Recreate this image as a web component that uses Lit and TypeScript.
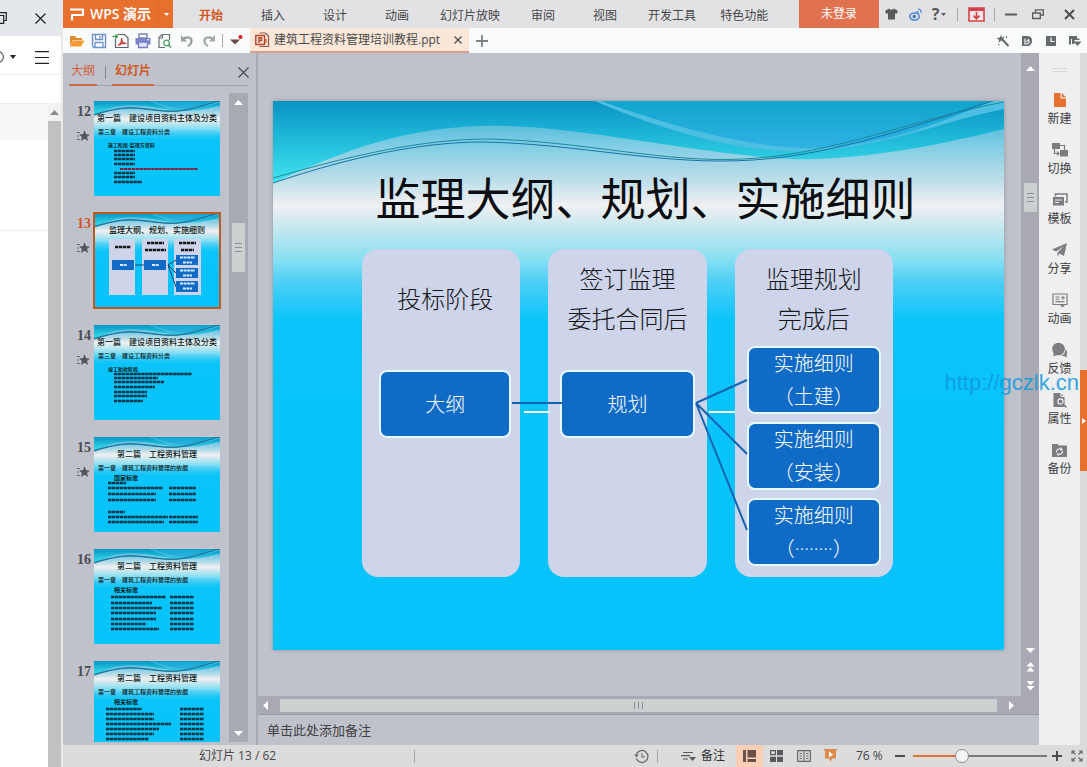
import { LitElement, html, svg, css, nothing } from "lit";
import { customElement, state } from "lit/decorators.js";
import { classMap } from "lit/directives/class-map.js";

const icon = (w: number, h: number, body: unknown) =>
  html`<svg width=${w} height=${h} viewBox="0 0 ${w} ${h}" fill="none" aria-hidden="true">${body}</svg>`;

const icons = {
  logo: icon(15, 14, svg`<path d="M0 2.500H13V8H2V13.500" stroke="#fff" stroke-width="2.200" stroke-linejoin="round"/>`),
  folder: icon(16, 14, svg`<path d="M1 12V2H6L7.5 4H13V6H4Z" fill="#e08a2c"/><path d="M4.2 6.5H15.5L12 12.5H1Z" fill="#f79a35"/>`),
  save: icon(16, 16, svg`<path d="M1.5 1.5H14.5V14.5H3L1.5 13Z" stroke="#6f93cf" stroke-width="1.4"/><path d="M4.5 2V6.5H11.5V2M4 14V9.5H12V14" stroke="#6f93cf" stroke-width="1.3"/><path d="M9 3V5.500" stroke="#6f93cf" stroke-width="1.4"/>`),
  pdf: icon(18, 16, svg`<path d="M5.500 1.5H12.500L16 5V14.500H3.500V6" stroke="#5f6468" stroke-width="1.2"/><path d="M0.500 3.500H5.500M3.500 1.500L5.500 3.500L3.500 5.500" stroke="#3f9a57" stroke-width="1.3"/><path d="M6 12.500C8.500 11 10 8 9.500 5C9.500 8.500 11.500 10.500 14.500 10.500C11 10 8 11 6 12.500Z" stroke="#d0393c" stroke-width="1.2"/>`),
  print: icon(16, 16, svg`<path d="M4 1H12V5H4Z" stroke="#7880c4" stroke-width="1.4"/><path d="M0.500 5H15.500V11.500H0.500Z" fill="#7c84c8"/><path d="M3.500 9H12.500V14.500H3.500Z" fill="#dfe1f5" stroke="#7880c4" stroke-width="1.3"/><path d="M12 6.800H14" stroke="#fff"/>`),
  preview: icon(16, 16, svg`<path d="M12.500 7V1.500H5L2 4.500V14.500H8" stroke="#6a6e72" stroke-width="1.2"/><path d="M5.500 1.500V5H2" stroke="#6a6e72"/><circle cx="9.500" cy="10" r="2.800" stroke="#4b9b5d" stroke-width="1.2"/><path d="M11.500 12L14 14.500" stroke="#4b9b5d" stroke-width="1.600"/>`),
  undo: icon(14, 13, svg`<path d="M2.500 5.500C7 1.500 12 3.500 11.500 7.500C11.300 9.500 10 11 8 12" stroke="#999ca1" stroke-width="2.200"/><path d="M1 1V7.500H7Z" fill="#999ca1"/>`),
  redo: icon(14, 13, svg`<path d="M11.500 5.500C7 1.500 2 3.500 2.500 7.500C2.700 9.500 4 11 6 12" stroke="#a3a6aa" stroke-width="2.200"/><path d="M13 1V7.500H7Z" fill="#a3a6aa"/>`),
  more: icon(16, 14, svg`<path d="M1 5.500H11L6 10.500Z" fill="#6a4a4a"/><circle cx="11.500" cy="3" r="2.100" fill="#d8202c"/>`),
  ppt: icon(15, 16, svg`<path d="M4.500 1H10.500L13.500 4V14.500H4.500" stroke="#8d5a4c" stroke-width="1.200"/><path d="M0.800 3.500H9.500V12.500H0.800Z" fill="#fbe6d8" stroke="#b8422a" stroke-width="1.400"/><path d="M4 11V5.800H6.500V8.500H4" stroke="#b8422a" stroke-width="1.400"/><path d="M11 7V11" stroke="#b8422a"/>`),
  x8: icon(8, 8, svg`<path d="M0.500 0.500L7.500 7.500M7.500 0.500L0.500 7.500" stroke="currentColor" stroke-width="1.100"/>`),
  x11: icon(11, 11, svg`<path d="M0.500 0.500L10.500 10.500M10.500 0.500L0.500 10.500" stroke="currentColor" stroke-width="1.300"/>`),
  xBold: icon(11, 11, svg`<path d="M1 1L10 10M10 1L1 10" stroke="currentColor" stroke-width="2"/>`),
  plusTab: icon(12, 12, svg`<path d="M6 0V12M0 6H12" stroke="#7d8084" stroke-width="1.800"/>`),
  shirt: icon(13, 12, svg`<path d="M4 0.500C5 2 8 2 9 0.500L13 3L11.500 6L10 5.300V11.500H3V5.300L1.500 6L0 3Z" fill="#5a5a5c"/>`),
  weibo: icon(13, 13, svg`<ellipse cx="5.500" cy="8.500" rx="4.700" ry="3.500" stroke="#5b8fd6" stroke-width="1.700"/><circle cx="5.300" cy="8.500" r="1.700" fill="#3f73bd"/><path d="M7 4.200L9 3.800V6M9 0.800C11.500 0.800 12.500 3 12 5" stroke="#5b8fd6" stroke-width="1.300"/>`),
  download: icon(17, 15, svg`<path d="M1 1H16V14H1Z" fill="#f6e7e7" stroke="#d4424c" stroke-width="1.600"/><path d="M1 1H16V4H1Z" fill="#d4424c"/><path d="M8.500 5V11.500M5.500 8.700L8.500 11.700L11.500 8.700" stroke="#d4424c" stroke-width="1.700"/>`),
  min: icon(12, 3, svg`<path d="M0 1.500H12" stroke="#5b5b5d" stroke-width="2"/>`),
  restore: icon(12, 11, svg`<path d="M3.500 3V0.800H11.300V6H8.500" stroke="#5b5b5d" stroke-width="1.300"/><path d="M0.700 4H8.300V9.500H0.700Z" stroke="#5b5b5d" stroke-width="1.300"/>`),
  wand: icon(14, 13, svg`<path d="M5.500 4.500L12.500 12" stroke="#66696d" stroke-width="2"/><path d="M5 0.500L5.800 3.500L9 2.500L7 5L8 8L5 6.500L2.500 9L3 5.800L0.500 4L4 3.500Z" fill="#66696d"/><path d="M2 10.500H3.500M10.500 2V4" stroke="#66696d"/>`),
  docs: icon(12, 12, svg`<path d="M1 1H6C10.500 1 11 4 11 6C11 9 9 11 6 11H1Z" fill="#66696d"/><path d="M4 3.500V9H5.500C8.500 8.500 8.500 6.500 7.500 4.500L5.500 7" stroke="#fff" stroke-width="1.100"/>`),
  clockSq: icon(12, 12, svg`<path d="M1 1H11V11H1Z" fill="#66696d"/><path d="M6 2.500V6.500H9.500" stroke="#fff" stroke-width="1.200"/>`),
  skinMenu: icon(14, 12, svg`<path d="M1 1H9V3.500H11.500V5H6.500V9H4V4H3V9.500H1Z" fill="#66696d"/><path d="M5.500 6.500H13.500L9.500 11Z" fill="#66696d"/>`),
  star: icon(13, 12, svg`<path d="M0 2.500H2.500M0 6H1.500M0 9.500H2.500" stroke="#55565b" stroke-width="1"/><path d="M7.500 0.300L9.100 4.200L13 4.400L10 7L11.100 11L7.500 8.700L3.900 11L5 7L2 4.400L5.900 4.200Z" fill="#55565b"/>`),
  newDoc: icon(16, 16, svg`<path d="M2 1H8.500V6.500H14V15H2Z" fill="#e8702f"/><path d="M9.800 1L14 5.300H9.800Z" fill="#e8702f"/>`),
  swap: icon(18, 16, svg`<path d="M1 1H9V7H1Z" fill="#7b7d80"/><path d="M9 8H17V14.500H9Z" fill="#7b7d80"/><path d="M9 3.500H13.500V8M3.500 7V11.500H7.500M6 9.500L8 11.500L6 13.500" stroke="#7b7d80" stroke-width="1.200"/>`),
  template: icon(16, 14, svg`<path d="M3.500 3.500V1H15V9H13" stroke="#7b7d80" stroke-width="1.500"/><path d="M1 4H12V12.500H1Z" fill="#7b7d80"/><path d="M3 7H10M3 9.500H7" stroke="#efeff0" stroke-width="1.100"/>`),
  share: icon(17, 16, svg`<path d="M16 1L13 14L8.500 11.500L6.500 14.500V10.500L12.500 4.500L5 9.500L1 7.500Z" fill="#7b7d80"/>`),
  anim: icon(16, 16, svg`<path d="M1 2H15V12.500H1Z" stroke="#7b7d80" stroke-width="1.200"/><path d="M3.500 5H7.500M3.500 7.300H7.500M3.500 9.600H12.500M9 5.800H13M11 4V7.800" stroke="#7b7d80" stroke-width="1.100"/><path d="M8 13H13L10.500 15.500Z" fill="#7b7d80"/>`),
  feedback: icon(17, 16, svg`<circle cx="7.500" cy="7" r="6.300" fill="#7b7d80"/><path d="M2.500 10V14.500L7 12.500Z" fill="#7b7d80"/><path d="M14.500 7.500C14.500 11 12.500 13 10 13.700L13 14L16 15.500L15.500 12.500C17 11 16 8.500 14.500 7.500Z" fill="#7b7d80"/>`),
  props: icon(16, 17, svg`<path d="M1.500 1H8.500L12.500 5V15H1.500Z" fill="#7b7d80"/><path d="M9 0.500V4.500H13" stroke="#efeff0"/><circle cx="8.500" cy="9.500" r="2.600" stroke="#efeff0" stroke-width="1.200"/><path d="M10.500 11.500L14.500 15.500" stroke="#7b7d80" stroke-width="1.600"/>`),
  backup: icon(17, 15, svg`<path d="M1 1H6.500L8 2.500H16V14H1Z" fill="#7b7d80"/><path d="M5.500 9.500C5 6.500 8 4.800 10.500 6.300M11.500 7.500C12 10.500 9 12.200 6.700 10.800M9.500 4.500L11 6.500L8.800 7.300M7.500 12.500L6 10.500" stroke="#efeff0" stroke-width="1.100"/>`),
  history: icon(15, 15, svg`<path d="M2.300 5.500A6 6 0 1 1 2.300 9.500" stroke="#6e6f72" stroke-width="1.300"/><path d="M0 5.500H5L2.500 8.500Z" fill="#6e6f72"/><path d="M8 4.500V8H11" stroke="#6e6f72" stroke-width="1.200"/>`),
  notes: icon(15, 11, svg`<path d="M2 1.500H12M0 4.700H9M2 8H7" stroke="#58595c" stroke-width="1.200"/><path d="M8 6H15L11.500 10Z" fill="#58595c"/>`),
  viewNormal: icon(13, 12, svg`<path d="M0 0H3V12H0ZM4.500 0H13V7.500H4.500ZM4.500 9H13V12H4.500Z" fill="#6a5149"/>`),
  viewSorter: icon(13, 12, svg`<path d="M0.600 0.600H5.400V4.600H0.600Z" stroke="#58595c" stroke-width="1.200"/><path d="M7 0H13V5.200H7ZM0 6.700H6V12H0ZM7 6.700H13V12H7Z" fill="#58595c"/>`),
  viewRead: icon(14, 12, svg`<path d="M0.600 0.600H13.400V11.400H0.600ZM7 0.600V11.400" stroke="#66676a" stroke-width="1.100"/><path d="M2.500 3.500H5M2.500 6H5M2.500 8.500H5M9 3.500H11.500M9 6H11.500M9 8.500H11.500" stroke="#66676a"/>`),
  viewPlay: icon(13, 14, svg`<path d="M0 0H13V1.500H12V9.500H8L6.500 13L5 9.500H1V1.500H0Z" fill="#dd8a4f"/><path d="M5 2.500L9 5.500L5 8.500Z" fill="#fff"/>`),
  fit: icon(12, 12, svg`<path d="M1 4V1H4M8 1H11V4M11 8V11H8M4 11H1V8M1.500 1.500L4.500 4.500M10.500 1.500L7.500 4.500M10.500 10.500L7.500 7.500M1.500 10.500L4.500 7.500" stroke="#66676a" stroke-width="1.100"/>`),
  up: icon(9, 5, svg`<path d="M4.500 0L9 5H0Z" fill="currentColor"/>`),
  down: icon(9, 5, svg`<path d="M4.500 5L9 0H0Z" fill="currentColor"/>`),
  left: icon(5, 9, svg`<path d="M5 0V9L0 4.500Z" fill="currentColor"/>`),
  right: icon(5, 9, svg`<path d="M0 0V9L5 4.500Z" fill="currentColor"/>`),
  prev: icon(9, 10, svg`<path d="M4.500 0L8.500 4.500H0.500ZM4.500 5L8.500 9.500H0.500Z" fill="#fff"/>`),
  next: icon(9, 10, svg`<path d="M4.500 4.500L8.500 0H0.500ZM4.500 9.500L8.500 5H0.500Z" fill="#fff"/>`),
};

const ui = css`
  * { box-sizing: border-box; }
  svg { display: block; flex: none; }
  button {
    display: flex; align-items: center; justify-content: center;
    margin: 0; padding: 0; border: 0; background: none;
    color: inherit; font: inherit; white-space: nowrap;
  }
`;

/** The shared slide master: vertical gradient with the wave ribbon on top. */
@customElement("slide-backdrop")
class SlideBackdrop extends LitElement {
  static styles = css`
    :host { position: absolute; inset: 0; display: block; }
    svg { display: block; width: 100%; height: 100%; }
  `;
  render() {
    return html`<svg viewBox="0 0 731 549" preserveAspectRatio="none" fill="none" aria-hidden="true">
      <defs>
        <linearGradient id="base" x1="0" y1="0" x2="0" y2="549" gradientUnits="userSpaceOnUse">
          <stop offset="0" stop-color="#2fa9d3"/><stop offset="0.075" stop-color="#7acbe4"/>
          <stop offset="0.135" stop-color="#b4dbe8"/><stop offset="0.19" stop-color="#f0f0f2"/>
          <stop offset="0.24" stop-color="#bce6ee"/><stop offset="0.29" stop-color="#86dff3"/>
          <stop offset="0.33" stop-color="#4dcff6"/><stop offset="0.4" stop-color="#0ac4fa"/>
          <stop offset="1" stop-color="#06c3fb"/>
        </linearGradient>
        <linearGradient id="ribbon" x1="0" y1="0" x2="0" y2="80" gradientUnits="userSpaceOnUse">
          <stop offset="0" stop-color="#0a93c4"/><stop offset="0.4" stop-color="#1cb4d6"/><stop offset="1" stop-color="#40e2ee"/>
        </linearGradient>
        <linearGradient id="sheen" x1="0" y1="0" x2="0" y2="55" gradientUnits="userSpaceOnUse">
          <stop offset="0" stop-color="#0fa5cd"/><stop offset="1" stop-color="#36b4e8"/>
        </linearGradient>
      </defs>
      <path d="M0 0H731V549H0Z" fill="url(#base)"/>
      <path d="M0 0H731V28C660 46 580 60 520 58C420 54 300 22 207 25C120 28 60 55 0 82Z" fill="url(#ribbon)"/>
      <path d="M322 0C400 34 480 54 540 50C620 44 670 20 731 8V0Z" fill="#4cbfe3"/>
      <path d="M328 0C405 28 490 50 550 47C620 42 670 20 720 0Z" fill="url(#sheen)"/>
      <path vector-effect="non-scaling-stroke" d="M0 77C80 54 150 38 215 38C310 40 390 62 470 58C560 54 640 18 731 1" stroke="#1e8a9c"/>
      <path vector-effect="non-scaling-stroke" d="M0 82C80 55 150 41 210 41C310 43 390 65 480 59C560 54 640 26 731 -4" stroke="#1874a4"/>
    </svg>`;
  }
}

/** The enlarged slide under edit. */
@customElement("slide-stage")
class SlideStage extends LitElement {
  static styles = [ui, css`
    :host {
      position: relative; display: block; width: 100%; aspect-ratio: 731 / 549; overflow: hidden;
      font-family: "Noto Sans CJK SC", sans-serif;
    }
    .title {
      position: relative; margin: 0; padding: 66px 0 22px 14px; color: #0b0d10;
      font-size: 45px; line-height: 60px; font-weight: 400; text-align: center; white-space: nowrap;
    }
    .cards {
      position: relative; display: grid; grid-template-columns: repeat(3, minmax(0, 1fr));
      column-gap: 28px; margin: 0 111px 0 89px; height: 328px;
    }
    .card { padding: 0 12px; border-radius: 16px; background: #ced4ea; }
    .card:first-child { padding: 0 9px 0 17px; }
    .head {
      display: flex; flex-direction: column; justify-content: center; height: 97px; margin: 0;
      color: #17181c; font-size: 24px; line-height: 40px; font-weight: 300; text-align: center; white-space: nowrap;
    }
    .nodes { display: grid; gap: 8px; }
    .nodes.low { padding-top: 24px; }
    .node {
      display: flex; flex-direction: column; justify-content: center; height: 68px;
      border: 2px solid #e4f8ff; border-radius: 8px; background: #0f6bc6; color: #fff;
      font: 300 20px/33px "Open Sans", "Noto Sans CJK SC", sans-serif; text-align: center; white-space: nowrap;
    }
    .links { position: absolute; inset: 0; width: 100%; height: 100%; }
  `];
  private cards = [
    { head: ["投标阶段"], nodes: [["大纲"]] },
    { head: ["签订监理", "委托合同后"], nodes: [["规划"]] },
    { head: ["监理规划", "完成后"], nodes: [["实施细则", "（土建）"], ["实施细则", "（安装）"], ["实施细则", "（········）"]] },
  ];
  render() {
    return html`
      <slide-backdrop></slide-backdrop>
      <h1 class="title">监理大纲、规划、实施细则</h1>
      <div class="cards">
        ${this.cards.map((c) => html`<section class="card">
          <h2 class="head">${c.head.map((l) => html`<span>${l}</span>`)}</h2>
          <div class=${classMap({ nodes: true, low: c.nodes.length === 1 })}>
            ${c.nodes.map((n) => html`<div class="node">${n.map((l) => html`<span>${l}</span>`)}</div>`)}
          </div>
        </section>`)}
      </div>
      <svg class="links" viewBox="0 0 731 549" fill="none" aria-hidden="true">
        <path d="M251 311H277M436 311H462" stroke="#fff" stroke-width="2"/>
        <path d="M239 302H289M423 302L474 279M423 302L474 353M423 302L474 429" stroke="#1463b0" stroke-width="2"/>
      </svg>`;
  }
}

type Row = [x: number, y: number, w: number, color?: string];
interface Thumb { no: number; star: boolean; title: string; sub?: string; head?: string; wide?: boolean; rows: Row[]; }

const pairs = (x: number, ys: number[], ws: number[], x2: number, w2: number): Row[] =>
  ys.flatMap((y, i) => [[x, y, ws[i]], [x2, y, w2]] as Row[]);

const thumbs: Thumb[] = [
  { no: 12, star: true, title: "第一篇　建设项目资料主体及分类", sub: "第三章　建设工程资料分类", head: "施工阶段-监理方资料",
    rows: [[20, 50, 21], [20, 54, 21], [20, 58, 21], [20, 63, 21], [26, 68, 78, "#7a2038"], [20, 72, 21], [20, 76, 21], [20, 81, 28]] },
  { no: 13, star: true, title: "监理大纲、规划、实施细则", rows: [] },
  { no: 14, star: true, title: "第一篇　建设项目资料主体及分类", sub: "第三章　建设工程资料分类", head: "竣工验收阶段",
    rows: [[20, 49, 78], [20, 53, 44], [20, 57, 50], [20, 62, 41], [20, 67, 33], [20, 71, 33], [20, 76, 29]] },
  { no: 15, star: true, title: "第二篇　工程资料管理", sub: "第一章　建筑工程资料管理的依据", head: "国家标准", wide: true,
    rows: [[14, 46, 18], ...pairs(14, [51, 57, 63], [55, 48, 48], 75, 27), [14, 75, 17], ...pairs(14, [80, 85], [60, 56], 75, 29)] },
  { no: 16, star: false, title: "第二篇　工程资料管理", sub: "第一章　建筑工程资料管理的依据", head: "相关标准", wide: true,
    rows: pairs(17, [48, 54, 59, 64, 70, 75, 80], [55, 41, 51, 45, 45, 35, 48], 76, 24) },
  { no: 17, star: false, title: "第二篇　工程资料管理", sub: "第一章　建筑工程资料管理的依据", head: "相关标准", wide: true,
    rows: pairs(12, [48, 53, 58, 63, 68, 73, 78], [36, 48, 48, 65, 53, 48, 43], 86, 24) },
];

/** Outline pane with slide previews. */
@customElement("slide-list")
class SlideList extends LitElement {
  static styles = [ui, css`
    :host { display: flex; flex-direction: column; width: 195px; border-right: 2px solid #a9abb6; color: #4c4d52; }
    .tabs { display: flex; align-items: center; height: 33px; margin: 0 7px 7px 6px; padding-top: 6px; border-bottom: 1px solid #9fa1ac; color: #d2613a; }
    .tab { height: 27px; padding: 0 2px; border-bottom: 2px solid #cf6a4a; }
    .tab.on { font-weight: 700; color: #cd5a22; padding: 0 3px; }
    .bar { width: 1px; height: 13px; margin: 0 6px 0 8px; background: #85868e; }
    .close { margin-left: auto; color: #4c4d52; width: 12px; height: 24px; }
    .body { flex: 1; display: flex; min-height: 0; margin-bottom: 3px; }
    .items { flex: 1; min-width: 0; overflow: hidden; margin: 0; padding: 8px 0 0 14px; list-style: none; }
    .item { display: flex; height: 112px; }
    .side { display: flex; flex-direction: column; width: 17px; gap: 7px; }
    .no { font: bold 14px/22px "Liberation Serif", serif; }
    .on .no { color: #d2552a; }
    .thumb {
      position: relative; flex-direction: column; align-items: stretch; justify-content: flex-start;
      width: 126px; height: 95px; overflow: hidden; text-align: left; color: #0c1a20;
      font-family: "Noto Sans CJK SC", sans-serif;
    }
    .frame { width: 126px; height: 95px; }
    .on .frame { outline: 3px solid #bb5a22; outline-offset: -2px; }
    .on .thumb { clip-path: inset(1px); }
    .t, .s, .h { position: relative; display: block; flex: none; white-space: nowrap; }
    .t { padding-top: 10px; font-size: 8px; line-height: 14px; font-weight: 500; text-align: center; }
    .s { padding-left: 4px; font-size: 6px; line-height: 14px; font-weight: 500; }
    .h { padding-left: 14px; padding-top: 2px; font-size: 5px; line-height: 8px; font-weight: 700; }
    .h.wide { padding: 0 0 0 20px; font-size: 6px; line-height: 5px; }
    .art { position: absolute; inset: 0; }
    .scroll { display: flex; flex-direction: column; align-items: center; width: 19px; margin-right: 8px; padding: 7px 0 6px; background: #a7a9b3; color: #fff; }
    .knob { display: flex; align-items: center; justify-content: center; width: 13px; height: 49px; margin: 118px 0 auto; background: #ccd0d1; }
  `];
  @state() current = 13;

  private diagram() {
    return svg`
      <path d="M15 26H41V82H15ZM48 26H74V82H48ZM80 26H107V82H80Z" fill="#ced4ea"/>
      <path d="M41 52H50M74 52L82 47M74 52L82 60M74 52L82 74" stroke="#17406a" stroke-width="1"/>
      <path d="M18 47H40V57H18ZM50 47H72V57H50ZM82 42H104V52H82ZM82 55H104V65H82ZM82 68H104V79H82Z" fill="#0f6bc6"/>
      <path d="M21 34H37M53 30H70M51 37H72M85 30H102M87 37H100" stroke="#15171c" stroke-width="2.500" stroke-dasharray="3.400 0.600"/>
      <path d="M26 52H33M58 52H65M86 44.500H101M89 49.500H98M86 57.500H101M89 62.500H98M86 70.500H101M89 75.500H98" stroke="#d6ecff" stroke-width="2" stroke-dasharray="3 0.600"/>`;
  }
  render() {
    return html`
      <div class="tabs">
        <button class="tab">大纲</button><span class="bar"></span><button class="tab on">幻灯片</button>
        <button class="close" aria-label="关闭">${icons.x11}</button>
      </div>
      <div class="body">
        <ol class="items">
          ${thumbs.map((t) => html`<li class=${classMap({ item: true, on: t.no === this.current })}>
            <div class="side"><span class="no">${t.no}</span>${t.star ? icons.star : nothing}</div>
            <div class="frame"><button class="thumb" @click=${() => (this.current = t.no)}>
              <slide-backdrop></slide-backdrop>
              <span class="t">${t.title}</span>
              ${t.sub ? html`<span class="s">${t.sub}</span>` : nothing}
              ${t.head ? html`<span class=${classMap({ h: true, wide: !!t.wide })}>${t.head}</span>` : nothing}
              <svg class="art" width="126" height="95" viewBox="0 0 126 95" fill="none" aria-hidden="true">
                ${t.rows.map(([x, y, w, c]) => svg`<path d="M${x} ${y}h${w}" stroke=${c ?? "#0a3346"} stroke-width=${c ? 2 : 2.5} stroke-dasharray="3.400 0.500"/>`)}
                ${t.no === 13 ? this.diagram() : nothing}
              </svg>
            </button></div>
          </li>`)}
        </ol>
        <div class="scroll">
          ${icons.up}
          <div class="knob">${icon(7, 9, svg`<path d="M0 0.500H7M0 4.500H7M0 8.500H7" stroke="#8b8e92"/>`)}</div>
          ${icons.down}
        </div>
      </div>`;
  }
}

/** Icon rail on the right edge. */
@customElement("tool-rail")
class ToolRail extends LitElement {
  static styles = [ui, css`
    :host { display: flex; color: #3c3d40; }
    .rail { width: 41px; padding-top: 15px; background: #efeff0; }
    .grip { width: 15px; height: 4px; margin: 0 auto 18px; border: solid #d3dade; border-width: 1px 0; }
    .tool { flex-direction: column; width: 100%; height: 50px; justify-content: flex-start; gap: 2px; }
    .pic { display: flex; align-items: center; justify-content: center; height: 20px; }
    .lbl { line-height: 14px; }
    .edge { width: 7px; padding-top: 317px; background: #dcdcdd; }
    .pull { width: 7px; height: 101px; background: #e8702f; color: #fff; }
  `];
  private tools: [string, unknown][] = [
    ["新建", icons.newDoc], ["切换", icons.swap], ["模板", icons.template], ["分享", icons.share],
    ["动画", icons.anim], ["反馈", icons.feedback], ["属性", icons.props], ["备份", icons.backup],
  ];
  render() {
    return html`
      <nav class="rail"><div class="grip"></div>
        ${this.tools.map(([l, i]) => html`<button class="tool"><span class="pic">${i}</span><span class="lbl">${l}</span></button>`)}
      </nav>
      <div class="edge"><button class="pull" aria-label="展开">${icon(4, 6, svg`<path d="M0 0L4 3L0 6Z" fill="#fff"/>`)}</button></div>`;
  }
}

@customElement("app-root")
class AppRoot extends LitElement {
  static styles = [ui, css`
    :host {
      display: flex; height: 100vh; overflow: hidden; position: relative;
      font: 12px/18px "Open Sans", "Noto Sans CJK SC", sans-serif; color: #46474a; background: #fff;
    }
    .behind { display: flex; flex-direction: column; width: 63px; border-right: 2px solid #e9e9e9; background: #fff; }
    .b-title { display: flex; align-items: center; justify-content: space-between; height: 36px; padding-right: 15px; background: #e4e8ec; color: #222; }
    .b-tools { display: flex; align-items: center; height: 39px; padding-right: 12px; border-bottom: 1px solid #ececec; padding-top: 4px; gap: 5px; }
    .b-tools .menu { margin-left: auto; }
    .b-body { flex: 1; display: flex; margin-top: 28px; }
    .b-list { flex: 1; }
    .b-row { height: 37px; background: #f7f7f7; border-top: 1px solid #ededed; }
    .b-rest { height: 91px; border-bottom: 1px solid #ececec; }
    .b-scroll { display: flex; flex-direction: column; align-items: center; width: 13px; padding-top: 7px; background: #f1f1f1; color: #8a8a8a; }
    .b-knob { flex: 1; width: 13px; margin-top: 6px; background: #c1c1c1; }

    .app { flex: 1; min-width: 0; display: flex; flex-direction: column; }
    .titlebar { display: flex; height: 28px; background: #e2e2e4; }
    .brand { display: flex; width: 110px; background: #e8702f; color: #fff; }
    .name { gap: 5px; flex: 1; font-size: 14px; font-weight: 600; }
    .drop { width: 15px; border-left: 1px solid #df6626; }
    .menus { display: flex; padding: 4px 0 0 7px; }
    .menu-item { padding: 0 19px; }
    .menu-item.long { padding: 0 12px; }
    .menu-item.on { color: #d2591d; font-weight: 700; }
    .login { width: 80px; margin-left: auto; background: #e0724f; color: #fff; }
    .sq { width: 24px; }
    .help { width: 24px; gap: 2px; font-size: 16px; font-weight: 700; color: #5a5a5c; }
    .sep { width: 13px; display: flex; align-items: center; justify-content: center; }
    .sep::before { content: ""; width: 1px; height: 13px; background: #a8a8aa; }
    .sep.thin { width: 4px; }
    .w-min { width: 20px; } .w-res { width: 34px; } .w-close { width: 28px; margin-right: 4px; color: #4d4d4f; }

    .toolbar { display: flex; height: 25px; padding-left: 3px; background: #fafbfb; }
    .tb { width: 22px; }
    .tb-more { width: 26px; }
    .doc { display: flex; align-items: center; width: 219px; padding: 0 6px 0 5px; background: #fbe7d8; border-bottom: 2px solid #d79f92; gap: 4px; white-space: nowrap; }
    .doc .x { margin-left: auto; width: 10px; height: 18px; }
    .add { width: 26px; }
    .tb-right { display: flex; margin-left: auto; }

    .work { flex: 1; min-height: 0; display: flex; background: #bfc2cb; }
    .editor { flex: 1; min-width: 0; display: flex; flex-direction: column; }
    .canvas-row { flex: 1; min-height: 0; display: flex; }
    .canvas { flex: 1; min-width: 0; padding: 48px 17px 0 15px; overflow: hidden; }
    .paper { box-shadow: 0 0 4px #8f929b; }
    .vscroll { display: flex; flex-direction: column; align-items: center; width: 18px; padding: 13px 0 5px; background: #a9a9b4; color: #fff; gap: 9px; }
    .vknob { display: flex; align-items: center; justify-content: center; width: 13px; height: 29px; margin: 103px 0 auto; background: #ccd0d1; }
    .hscroll { display: flex; align-items: center; height: 19px; padding: 0 25px 0 5px; background: #a9a9b4; color: #fff; gap: 12px; border-bottom: 1px solid #989aa5; }
    .hknob { flex: 1; display: flex; align-items: center; justify-content: center; height: 13px; background: #ccd0d1; }
    .notes { display: block; width: 100%; height: 30px; padding: 5px 9px; border: 0; resize: none; background: #bfc2cb; font: 13px/20px "Noto Sans CJK SC", sans-serif; color: #3f4044; outline: 0; }
    .notes::placeholder { color: #3f4044; opacity: 1; }

    .status { display: flex; align-items: center; height: 22px; padding-left: 136px; background: #dcdcdc; }
    .page { flex: none; width: 213px; }
    .hist { width: 28px; margin-left: auto; }
    .note-btn { width: 77px; gap: 5px; justify-content: flex-start; padding-left: 22px; color: #333; }
    .view { width: 27px; height: 22px; }
    .view.on { background: #fbcfb6; }
    .pct { width: 43px; padding-left: 12px; white-space: nowrap; }
    .minus { width: 26px; height: 20px; } .plus, .fit { width: 20px; height: 20px; }
    .zoom { appearance: none; width: 134px; height: 16px; margin: 0; background: linear-gradient(90deg, #e8702f 37%, #77787b 37%) center / 100% 2px no-repeat; }
    .zoom::-webkit-slider-thumb { appearance: none; width: 14px; height: 14px; border-radius: 50%; border: 1px solid #8b8c8f; background: #f5f5f5; }

    .mark { position: absolute; right: 8px; top: 373px; font: 22px/20px "Liberation Sans", Arial, sans-serif; color: #1199dd; opacity: 0.85; text-decoration: none; }
  `];
  @state() menu = "开始";
  @state() zoom = 76;

  private menus = ["开始", "插入", "设计", "动画", "幻灯片放映", "审阅", "视图", "开发工具", "特色功能"];
  private tools: [string, unknown][] = [
    ["打开", icons.folder], ["保存", icons.save], ["输出为PDF", icons.pdf], ["打印", icons.print],
    ["打印预览", icons.preview], ["撤消", icons.undo], ["恢复", icons.redo],
  ];
  private extras: [string, unknown][] = [["美化", icons.wand], ["文档", icons.docs], ["时钟", icons.clockSq], ["界面", icons.skinMenu]];

  render() {
    return html`
      <aside class="behind">
        <div class="b-title">
          ${icon(7, 12, svg`<path d="M0 0.700H6.300V8.500H4M0 3.500H3.700V11.300H0" stroke="#222" stroke-width="1.200"/>`)}
          ${icons.x11}
        </div>
        <div class="b-tools">
          ${icon(5, 12, svg`<circle cx="-2" cy="6" r="5.400" stroke="#555" stroke-width="1.200"/>`)}
          ${icon(6, 4, svg`<path d="M0 0H6L3 4Z" fill="#222"/>`)}
          <span class="menu">${icon(14, 13, svg`<path d="M0 0.700H14M0 6.500H14M0 12.300H14" stroke="#222" stroke-width="1.200"/>`)}</span>
        </div>
        <div class="b-body">
          <div class="b-list"><div class="b-row"></div><div class="b-rest"></div></div>
          <div class="b-scroll">${icons.up}<div class="b-knob"></div></div>
        </div>
      </aside>

      <div class="app">
        <header class="titlebar">
          <div class="brand">
            <button class="name">${icons.logo}<span>WPS 演示</span></button>
            <button class="drop" aria-label="菜单">${icon(5, 3, svg`<path d="M0 0H5L2.500 3Z" fill="#fff"/>`)}</button>
          </div>
          <nav class="menus">
            ${this.menus.map((m) => html`<button class=${classMap({ "menu-item": true, long: m.length > 2, on: m === this.menu })}
              @click=${() => (this.menu = m)}>${m}</button>`)}
          </nav>
          <button class="login">未登录</button>
          <button class="sq" aria-label="皮肤">${icons.shirt}</button>
          <button class="sq" aria-label="微博">${icons.weibo}</button>
          <button class="help" aria-label="帮助"><span>?</span>${icon(5, 3, svg`<path d="M0 0H5L2.500 3Z" fill="#5a5a5c"/>`)}</button>
          <span class="sep"></span>
          <button class="sq" aria-label="下载">${icons.download}</button>
          <span class="sep"></span>
          <button class="w-min" aria-label="最小化">${icons.min}</button>
          <button class="w-res" aria-label="还原">${icons.restore}</button>
          <button class="w-close" aria-label="关闭">${icons.xBold}</button>
        </header>

        <div class="toolbar">
          ${this.tools.map(([l, i]) => html`<button class="tb" aria-label=${l}>${i}</button>`)}
          <span class="sep thin"></span>
          <button class="tb-more" aria-label="更多">${icons.more}</button>
          <div class="doc">${icons.ppt}<span>建筑工程资料管理培训教程.ppt</span><button class="x" aria-label="关闭文档">${icons.x8}</button></div>
          <button class="add" aria-label="新建标签">${icons.plusTab}</button>
          <div class="tb-right">${this.extras.map(([l, i]) => html`<button class="sq" aria-label=${l}>${i}</button>`)}</div>
        </div>

        <main class="work">
          <slide-list></slide-list>
          <section class="editor">
            <div class="canvas-row">
              <div class="canvas"><slide-stage class="paper"></slide-stage></div>
              <div class="vscroll">
                ${icons.up}
                <div class="vknob">${icon(7, 9, svg`<path d="M0 0.500H7M0 4.500H7M0 8.500H7" stroke="#8b8e92"/>`)}</div>
                ${icons.down}${icons.prev}${icons.next}
              </div>
            </div>
            <div class="hscroll">${icons.left}
              <div class="hknob">${icon(9, 7, svg`<path d="M0.500 0V7M4.500 0V7M8.500 0V7" stroke="#8b8e92"/>`)}</div>
              ${icons.right}</div>
            <textarea class="notes" aria-label="备注" placeholder="单击此处添加备注"></textarea>
          </section>
          <tool-rail></tool-rail>
        </main>

        <footer class="status">
          <span class="page">幻灯片 13 / 62</span><span class="sep thin"></span>
          <button class="hist" aria-label="历史">${icons.history}</button><span class="sep thin"></span>
          <button class="note-btn">${icons.notes}<span>备注</span></button>
          <button class="view on" aria-label="普通视图">${icons.viewNormal}</button>
          <button class="view" aria-label="浏览视图">${icons.viewSorter}</button>
          <button class="view" aria-label="阅读视图">${icons.viewRead}</button>
          <button class="view" aria-label="放映">${icons.viewPlay}</button>
          <span class="pct">${this.zoom} %</span>
          <button class="minus" aria-label="缩小">${icon(10, 2, svg`<path d="M0 1H10" stroke="#4b4c4f" stroke-width="2"/>`)}</button>
          <input class="zoom" type="range" aria-label="显示比例" min="10" max="197" .value=${String(this.zoom)}
            @input=${(e: Event) => (this.zoom = Number((e.target as HTMLInputElement).value))} />
          <button class="plus" aria-label="放大">${icon(10, 10, svg`<path d="M0 5H10M5 0V10" stroke="#4b4c4f" stroke-width="2"/>`)}</button>
          <button class="fit" aria-label="适应窗口">${icons.fit}</button>
        </footer>
      </div>
      <a class="mark" href="http://gczlk.cn">http://gczlk.cn</a>`;
  }
}
